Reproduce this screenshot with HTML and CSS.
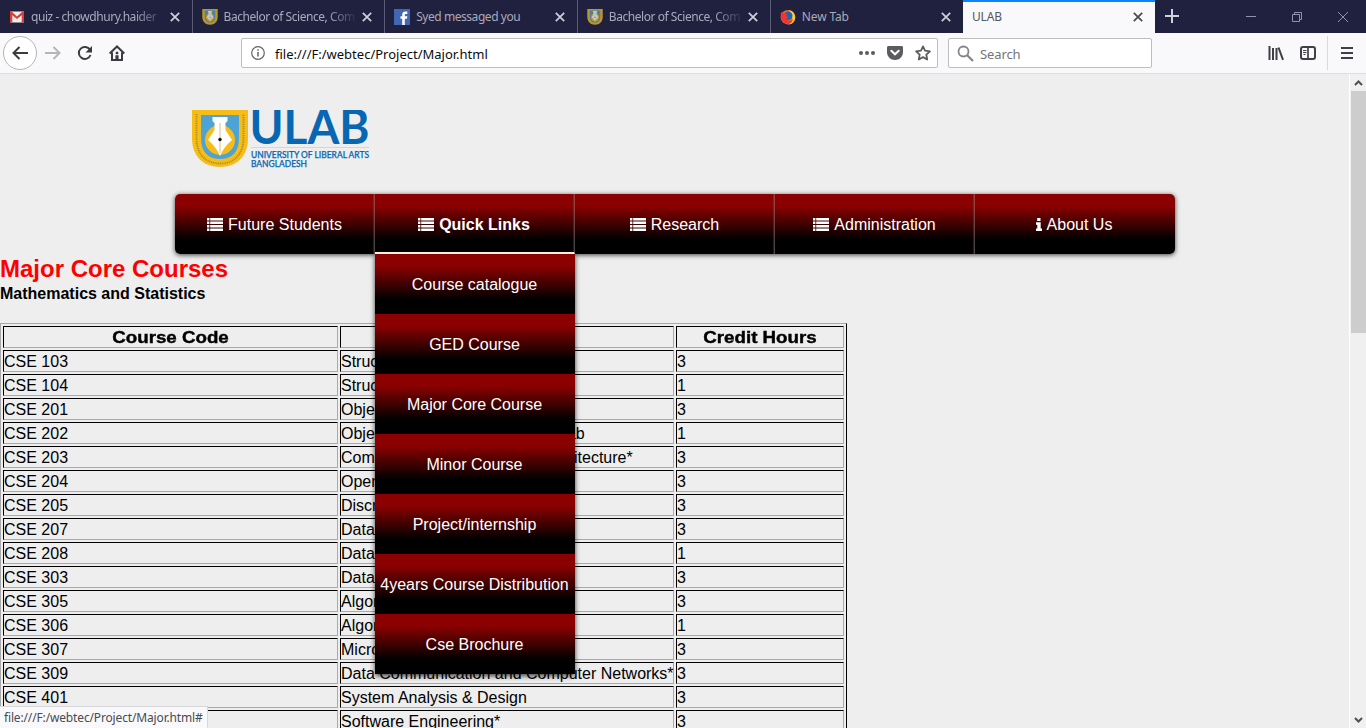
FILE: index.html
```
<!DOCTYPE html>
<html lang="en">
<head>
<meta charset="utf-8">
<title>ULAB</title>
<link rel="stylesheet" href="styles.css">
</head>
<body>
<svg class="defs" aria-hidden="true">
  <defs>
    <symbol id="close" viewBox="0 0 10 10"><path d="M.8.8l8.400 8.400M9.200.8L.8 9.200" fill="none" stroke="currentColor" stroke-width="1.700"/></symbol>
    <symbol id="list" viewBox="0 0 16 13"><path d="M0 0h2.400v2.600H0zM3.200 0H16v2.600H3.200zM0 3.500h2.400v2.600H0zM3.200 3.500H16v2.600H3.200zM0 7h2.400v2.600H0zM3.200 7H16v2.600H3.200zM0 10.400h2.400V13H0zM3.200 10.400H16V13H3.200z" fill="#fff"/></symbol>
    <symbol id="shield" viewBox="0 0 56 58">
      <path d="M0 0h56v28c0 18-11 29-28 29S0 46 0 28z" fill="#f6bd18"/>
      <path d="M9 5h38v23c0 14-7 21-19 21S9 42 9 28z" fill="#4da3d6"/>
      <circle cx="28" cy="30" r="15" fill="#f6bd18"/>
      <path d="M20.500 7h15v4l-2 2v7l6.500 10c-5 4-9 9-12 16-3-7-7-12-12-16l6.500-10v-7l-2-2z" fill="#fff"/>
      <path d="M28 13v30" stroke="#d9c178" stroke-width="1"/>
      <circle cx="28" cy="29.500" r="1.700" fill="#111"/>
    </symbol>
  </defs>
</svg>
<div class="browser">
  <div class="tabs">
    <div class="tab">
      <svg class="fav" viewBox="0 0 16 16"><path d="M1 2.500h14v11H1z" fill="#eee"/><path d="M1 13.500v-11h1.500L8 7.500l5.500-5H15v11h-2.300V6.200L8 10 3.300 6.200v7.300z" fill="#d93f35"/></svg>
      <span class="title t1">quiz - chowdhury.haider</span><svg class="x"><use href="#close"/></svg>
    </div>
    <div class="tab">
      <svg class="fav dim"><use href="#shield"/></svg>
      <span class="title t2">Bachelor of Science, Com</span><svg class="x"><use href="#close"/></svg>
    </div>
    <div class="tab">
      <svg class="fav" viewBox="0 0 16 16"><path d="M0 0h16v16H0z" fill="#4267b2"/><path d="M8.200 16V9.800H6.500V7.300h1.700V5.600C8.200 3.500 9.500 2.500 11.300 2.500h2v2.400h-1.300c-.9 0-1.200.4-1.200 1.100v1.300h2.500L13 9.800h-2.200V16z" fill="#fff"/></svg>
      <span class="title t3">Syed messaged you</span><svg class="x"><use href="#close"/></svg>
    </div>
    <div class="tab">
      <svg class="fav dim"><use href="#shield"/></svg>
      <span class="title t2">Bachelor of Science, Com</span><svg class="x"><use href="#close"/></svg>
    </div>
    <div class="tab">
      <svg class="fav" viewBox="0 0 16 16"><circle cx="8" cy="8.200" r="7.300" fill="#f4661b"/><path d="M9 1c5 1 7.500 6 5.500 10.500C13 14.500 10.500 15.500 8 15.500c4-2 5-5 3.500-8.500z" fill="#ffcb2e"/><circle cx="8.200" cy="6.800" r="4.300" fill="#1b66bd"/><path d="M1 3l3 1.500 3 .5-.5 2 2 1.500-2 1 1.500 2c2 .8 4 0 5-2-.3 4-3 5.800-6 5.300C1.500 14 0 8 1 3z" fill="#ed3730"/></svg>
      <span class="title t4">New Tab</span><svg class="x"><use href="#close"/></svg>
    </div>
    <div class="tab active"><span class="title t5">ULAB</span><svg class="x"><use href="#close"/></svg></div>
    <svg class="plus" viewBox="0 0 14 14"><path d="M7 0v14M0 7h14" stroke="#d0d0dc" stroke-width="2"/></svg>
    <div class="controls">
      <svg viewBox="0 0 12 12"><path d="M1 5.500h10" stroke="#9292a8"/></svg>
      <svg viewBox="0 0 12 12"><path d="M1.500 3.500h7v7h-7zM3.500 3.500v-2h7v7h-2" fill="none" stroke="#9292a8"/></svg>
      <svg viewBox="0 0 12 12"><path d="M1 1l10 10M11 1L1 11" stroke="#9292a8"/></svg>
    </div>
  </div>
  <div class="toolbar">
    <div class="back"><svg width="16" height="14" viewBox="0 0 16 14"><path d="M16 7H2M7.500 1L1.500 7l6 6" fill="none" stroke="#3b3b40" stroke-width="2"/></svg></div>
    <svg class="forward" width="16" height="14" viewBox="0 0 16 14"><path d="M0 7h14M8.500 1l6 6-6 6" fill="none" stroke="#b6b6b9" stroke-width="2"/></svg>
    <svg class="reload" width="16" height="16" viewBox="0 0 16 16"><path d="M13 4.800A6 6 0 1 0 13.500 10" fill="none" stroke="#3b3b40" stroke-width="2"/><path d="M15 1v6.500H8.500z" fill="#3b3b40"/></svg>
    <svg class="home" width="16" height="16" viewBox="0 0 16 16"><path d="M.7 8.500L8 1.500l7.300 7M3 7.500V15h10V7.500" fill="none" stroke="#3b3b40" stroke-width="2"/><path d="M6.700 15v-4.500h2.600V15M7 7h2v2H7z" fill="#3b3b40" stroke="#3b3b40" stroke-width=".5"/></svg>
    <div class="url">
      <svg width="14" height="14" viewBox="0 0 14 14"><circle cx="7" cy="7" r="6.300" fill="none" stroke="#66666b" stroke-width="1.200"/><path d="M7 6v4.500M7 3.300v1.500" stroke="#66666b" stroke-width="1.500"/></svg>
      <span class="address">file:///F:/webtec/Project/Major.html</span>
      <svg class="dots" width="16" height="16" viewBox="0 0 16 16"><g fill="#5b5b60"><circle cx="2" cy="8" r="2"/><circle cx="8" cy="8" r="2"/><circle cx="14" cy="8" r="2"/></g></svg>
      <svg class="pocket" width="16" height="16" viewBox="0 0 16 16"><path d="M1.500 1h13c1 0 1.500.6 1.500 1.500V7c0 4.500-3.500 8-8 8s-8-3.500-8-8V2.500C0 1.600.5 1 1.500 1z" fill="#5b5b60"/><path d="M4.300 5.800L8 9.300l3.700-3.500" fill="none" stroke="#fff" stroke-width="2" stroke-linecap="round"/></svg>
      <svg width="16" height="16" viewBox="0 0 16 16"><path d="M8 1.400l2 4.300 4.900.6-3.600 3.300.9 4.900L8 12.100l-4.200 2.400.9-4.900L1.100 6.300 6 5.700z" fill="none" stroke="#5b5b60" stroke-width="1.800" stroke-linejoin="round"/></svg>
    </div>
    <div class="search">
      <svg width="17" height="17" viewBox="0 0 17 17"><circle cx="6.500" cy="6.500" r="5" fill="none" stroke="#858589" stroke-width="1.800"/><path d="M10 10l6 6" stroke="#858589" stroke-width="2.200"/></svg>
      <span>Search</span>
    </div>
    <svg class="library" width="16" height="16" viewBox="0 0 16 16"><path d="M1.500 1v14M5 3v12M8.500 3v12M10.500 2.500L15 14.800" fill="none" stroke="#3f3f44" stroke-width="2"/></svg>
    <svg class="sidebar" width="16" height="16" viewBox="0 0 16 16"><rect x="1" y="2" width="14" height="12" rx="2" fill="none" stroke="#3f3f44" stroke-width="2"/><path d="M8 2v12" stroke="#3f3f44" stroke-width="1.700"/><path d="M3 5.500h3.500M3 7.500h3.500M3.500 9.500h2" stroke="#3f3f44"/></svg>
    <div class="menu"><svg width="12" height="12" viewBox="0 0 12 12"><path d="M0 1h12M0 6h12M0 11h12" stroke="#3f3f44" stroke-width="2"/></svg></div>
  </div>
  <div class="viewport">
    <main class="page">
      <svg class="logo" viewBox="0 0 178 60">
        <use href="#shield" width="56" height="58"/>
        <path d="M4.500 4v24c0 16 9 25.500 23.500 25.500S51.500 44 51.500 28V4" fill="none" stroke="#a98b24" stroke-width="1.800" stroke-dasharray="1 .8"/>
        <g class="logotext">
          <text x="57.500" y="34" font-size="47" textLength="120" lengthAdjust="spacingAndGlyphs">ULAB</text>
          <path d="M59 37.500h118" stroke="#f3d48b"/>
          <text class="sub" x="59" y="48" font-size="9" textLength="118" lengthAdjust="spacingAndGlyphs">UNIVERSITY OF LIBERAL ARTS</text>
          <text class="sub" x="59" y="57" font-size="9" textLength="56" lengthAdjust="spacingAndGlyphs">BANGLADESH</text>
        </g>
      </svg>
      <nav class="nav">
        <a><svg class="ico"><use href="#list"/></svg>Future Students</a>
        <div class="drop">
          <a class="current"><svg class="ico"><use href="#list"/></svg>Quick Links</a>
          <div class="submenu">
            <a>Course catalogue</a><a>GED Course</a><a>Major Core Course</a><a>Minor Course</a><a>Project/internship</a><a>4years Course Distribution</a><a>Cse Brochure</a>
          </div>
        </div>
        <a><svg class="ico"><use href="#list"/></svg>Research</a>
        <a><svg class="ico"><use href="#list"/></svg>Administration</a>
        <a><svg class="info" viewBox="0 0 6 13"><path d="M1.200 0h3.300v3H1.200zM0 4.300h4.700v6.300H6V13H0v-2.400h1.300V6.700H0z" fill="#fff"/></svg>About Us</a>
      </nav>
      <h2>Major Core Courses</h2>
      <h4>Mathematics and Statistics</h4>
      <table class="courses">
        <colgroup><col class="code"><col class="name"><col class="credit"></colgroup>
        <tr><th><span>Course Code</span></th><th></th><th><span>Credit Hours</span></th></tr>
        <tr><td>CSE 103</td><td>Structured Programming</td><td>3</td></tr>
        <tr><td>CSE 104</td><td>Structured Programming Lab</td><td>1</td></tr>
        <tr><td>CSE 201</td><td>Object Oriented Programming</td><td>3</td></tr>
        <tr><td>CSE 202</td><td>Object Oriented Programming Lab</td><td>1</td></tr>
        <tr><td>CSE 203</td><td>Computer Organization and Architecture*</td><td>3</td></tr>
        <tr><td>CSE 204</td><td>Operating Systems</td><td>3</td></tr>
        <tr><td>CSE 205</td><td>Discrete Mathematics</td><td>3</td></tr>
        <tr><td>CSE 207</td><td>Data Structures</td><td>3</td></tr>
        <tr><td>CSE 208</td><td>Data Structures Lab</td><td>1</td></tr>
        <tr><td>CSE 303</td><td>Database Systems</td><td>3</td></tr>
        <tr><td>CSE 305</td><td>Algorithms</td><td>3</td></tr>
        <tr><td>CSE 306</td><td>Algorithms Lab</td><td>1</td></tr>
        <tr><td>CSE 307</td><td>Microprocessors</td><td>3</td></tr>
        <tr><td>CSE 309</td><td>Data Communication and Computer Networks*</td><td>3</td></tr>
        <tr><td>CSE 401</td><td>System Analysis &amp; Design</td><td>3</td></tr>
        <tr><td></td><td>Software Engineering*</td><td>3</td></tr>
      </table>
    </main>
    <div class="scrollbar">
      <svg width="9" height="6" viewBox="0 0 9 6"><path d="M1 5l3.500-3.500L8 5" fill="none" stroke="#505050" stroke-width="2"/></svg>
      <div class="thumb"></div>
      <svg class="down" width="9" height="6" viewBox="0 0 9 6"><path d="M1 1l3.500 3.500L8 1" fill="none" stroke="#505050" stroke-width="2"/></svg>
    </div>
    <div class="status"><span>file:///F:/webtec/Project/Major.html#</span></div>
  </div>
</div>
</body>
</html>
```
FILE: styles.css
```
* { box-sizing: border-box; }
body { margin: 0; overflow: hidden; font-family: "Liberation Sans", Arial, sans-serif; }
svg { display: block; flex: none; }
.defs { position: absolute; width: 0; height: 0; }
.browser { display: flex; flex-direction: column; width: 1366px; height: 728px; overflow: hidden; }

.tabs { display: flex; height: 33px; flex: none; background: #20213f; font-family: "Noto Sans", sans-serif; font-size: 12px; color: #aaaaba; }
.tab { display: flex; align-items: center; width: 192.6px; flex: none; padding: 0 12px 0 9px; border-right: 1px solid #5b5c75; }
.tab:nth-child(4) { width: 193px; }
.tab:nth-child(5) { width: 192.2px; border-right: 0; }
.tab.active { width: 192px; border: 0; border-top: 2px solid #0a84ff; background: #f9f9fb; color: #56565d; padding-bottom: 2px; }
.fav { width: 16px; height: 16px; margin-right: 6px; }
.dim { opacity: .75; }
.title { flex: 1; min-width: 0; overflow: hidden; white-space: nowrap; line-height: 20px; letter-spacing: -.45px; }
.t4, .t5 { letter-spacing: -.15px; }
.t1, .t2 { -webkit-mask-image: linear-gradient(to right, #000 78%, transparent 102%); mask-image: linear-gradient(to right, #000 78%, transparent 102%); }
.x { width: 10px; height: 10px; margin-left: 6px; color: #d0d0dc; }
.active .x { color: #48484e; }
.plus { width: 14px; height: 14px; margin: 9px 0 0 10px; }
.controls { display: flex; gap: 34px; margin: 11px 17px 0 auto; }
.controls svg { width: 12px; height: 12px; }

.toolbar { display: flex; align-items: center; height: 41px; flex: none; background: #f9f9fb; border-bottom: 1px solid #dededf; font-family: "Noto Sans", sans-serif; font-size: 13px; }
.back { display: flex; align-items: center; justify-content: center; width: 34px; height: 34px; margin-left: 3px; border: 1px solid #b5b5b8; border-radius: 50%; background: #fff; flex: none; }
.forward { margin-left: 8px; }
.reload { margin-left: 16px; }
.home { margin-left: 16px; }
.url, .search { display: flex; align-items: center; height: 30px; border: 1px solid #bebec0; border-radius: 2px; background: #fff; flex: none; }
.url { width: 697px; margin-left: 116px; padding: 0 6px 0 9px; }
.address { margin-left: 10px; padding-top: 1px; color: #0c0c0d; white-space: nowrap; }
.dots { margin-left: auto; }
.pocket { margin: 0 12px; }
.search { width: 204px; margin-left: 10px; padding: 0 8px; gap: 6px; color: #74747a; }
.search span { padding-top: 1px; letter-spacing: -.1px; }
.library { margin-left: 116px; }
.sidebar { margin-left: 16px; }
.menu { display: flex; align-items: center; justify-content: center; width: 39px; height: 34px; margin-left: 11px; border-left: 1px solid #d9d9dc; }

.viewport { position: relative; display: flex; flex: 1; min-height: 0; }
.page { flex: 1; min-width: 0; overflow: hidden; background: #eee; color: #000; }
.logo { width: 178px; height: 60px; margin: 36px 0 24px 192px; }
.logotext { fill: #0867b2; font-family: Lato, sans-serif; font-weight: 700; }
.sub { font-weight: 500; stroke: #0867b2; stroke-width: .25px; }

.nav { display: flex; width: 1000px; height: 60px; margin-left: 175px; border-radius: 5px; color: #fff; box-shadow: 0 1px 5px rgba(0, 0, 0, .75); background: linear-gradient(#8b0000 20%, #000 76%); }
.nav a { display: flex; align-items: center; justify-content: center; width: 200px; height: 60px; padding-top: 2px; font-size: 16px; white-space: nowrap; }
.nav > a:not(:last-child), .drop .current { border-right: 1px solid rgba(150, 130, 130, .5); box-shadow: inset -1px 0 1px rgba(150, 130, 130, .25); }
.nav > a:last-child { padding-right: 2px; }
.ico { width: 16px; height: 13px; margin: -2px 5px 0 0; }
.info { width: 6px; height: 13px; margin: -2px 5px 0 0; }
.drop { position: relative; width: 200px; }
.nav .current { font-weight: 700; border-bottom: 2px solid #f8eee8; padding-top: 4px; padding-right: 1px; }
.submenu { position: absolute; z-index: 2; top: 60px; left: 0; width: 200px; box-shadow: 0 2px 5px rgba(0, 0, 0, .75); clip-path: inset(0 -8px -10px -8px); }
.submenu a { padding-right: 1px; background: linear-gradient(#8b0000 20%, #000 76%); }

h2 { margin: 0; height: 30px; line-height: 30px; font-size: 24px; color: #f00; white-space: nowrap; }
h4 { margin: 0 0 20px; height: 19px; line-height: 19px; font-size: 16px; }
.courses { table-layout: fixed; width: 847px; border: 1px solid; border-color: #a9a9a9 #000 #000 #a9a9a9; border-spacing: 2px; font-size: 16px; line-height: 18px; }
.code { width: 335px; }
.name { width: 334px; }
.credit { width: 168px; }
.courses td, .courses th { height: 22px; padding: 2px 0 0; border: 1px solid; border-color: #000 #a9a9a9 #a9a9a9 #000; white-space: nowrap; }
.courses th span { display: block; transform: scaleX(1.17); -webkit-text-stroke: .4px #000; }

.scrollbar { display: flex; flex-direction: column; align-items: center; width: 17px; padding-top: 6px; border-left: 1px solid #fff; background: #f0f0f0; }
.thumb { width: 15px; height: 242px; margin-top: 5px; background: #cdcdcd; }
.down { margin: auto 0 5px; }
.status { position: absolute; z-index: 3; left: 0; bottom: 0; display: flex; align-items: center; width: 208px; height: 22px; padding-left: 4px; border-top: 1px solid #d8d8da; border-right: 1px solid #d8d8da; background: #f9f9fb; color: #4a4a50; font-family: "Noto Sans", sans-serif; font-size: 12px; letter-spacing: -.15px; white-space: nowrap; }
```
